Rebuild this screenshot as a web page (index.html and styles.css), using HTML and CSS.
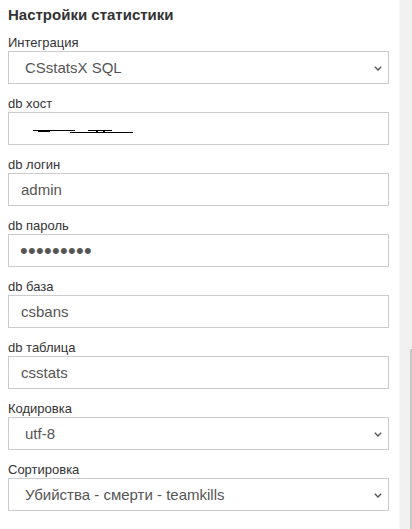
FILE: index.html
```html
<!DOCTYPE html>
<html lang="ru">
<head>
<meta charset="utf-8">
<title>Настройки статистики</title>
<link rel="stylesheet" href="styles.css">
</head>
<body>
<div class="page">
  <form class="panel">
    <h3 class="title">Настройки статистики</h3>

    <div class="field">
      <label class="label">Интеграция</label>
      <div class="select-wrap">
        <select class="control select"><option>CSstatsX SQL</option></select>
        <svg class="chevron" width="8" height="5" viewBox="0 0 8 5"><path d="M0.8 0.8 L4 4 L7.2 0.8" fill="none" stroke="#555" stroke-width="1.4"/></svg>
      </div>
    </div>

    <div class="field">
      <label class="label">db хост</label>
      <div class="input-wrap">
        <input class="control input" type="text" value="">
        <svg class="scribble" width="104" height="6" viewBox="0 0 104 6">
          <path d="M0 0.5 H42" stroke="#000" stroke-width="1"/>
          <path d="M5 1 H17" stroke="#000" stroke-width="2"/>
          <path d="M37 2.5 H100" stroke="#000" stroke-width="1"/>
          <path d="M55 0.5 H79" stroke="#000" stroke-width="1"/>
          <path d="M63 1.5 H65 M70 1.5 H72" stroke="#000" stroke-width="1"/>
        </svg>
      </div>
    </div>

    <div class="field">
      <label class="label">db логин</label>
      <input class="control input" type="text" value="admin">
    </div>

    <div class="field">
      <label class="label">db пароль</label>
      <input class="control input pass" type="password" value="123456789">
    </div>

    <div class="field">
      <label class="label">db база</label>
      <input class="control input" type="text" value="csbans">
    </div>

    <div class="field">
      <label class="label">db таблица</label>
      <input class="control input" type="text" value="csstats">
    </div>

    <div class="field">
      <label class="label">Кодировка</label>
      <div class="select-wrap">
        <select class="control select"><option>utf-8</option></select>
        <svg class="chevron" width="8" height="5" viewBox="0 0 8 5"><path d="M0.8 0.8 L4 4 L7.2 0.8" fill="none" stroke="#555" stroke-width="1.4"/></svg>
      </div>
    </div>

    <div class="field">
      <label class="label">Сортировка</label>
      <div class="select-wrap">
        <select class="control select"><option>Убийства - смерти - teamkills</option></select>
        <svg class="chevron" width="8" height="5" viewBox="0 0 8 5"><path d="M0.8 0.8 L4 4 L7.2 0.8" fill="none" stroke="#555" stroke-width="1.4"/></svg>
      </div>
    </div>
  </form>
  <div class="scrollbar"><div class="thumb"></div></div>
</div>
</body>
</html>
```

FILE: styles.css
```css
html, body {
  margin: 0;
  padding: 0;
  background: #fff;
}
body {
  font-family: "Liberation Sans", Arial, sans-serif;
  color: #333;
}
.page {
  display: flex;
  height: 529px;
  overflow: hidden;
}
.panel {
  flex: 1;
  padding: 6px 10px 0 8px;
  margin: 0;
}
.title {
  margin: 0 0 10px;
  font-size: 15px;
  line-height: 18px;
  font-weight: bold;
  color: #333;
}
.field {
  display: flex;
  flex-direction: column;
  margin-bottom: 11px;
}
.label {
  font-size: 13px;
  line-height: 17px;
  color: #333;
}
.control {
  box-sizing: border-box;
  display: block;
  width: 100%;
  height: 33px;
  margin: 0;
  border: 1px solid #ccc;
  border-radius: 0;
  background: #fff;
  font-family: "Liberation Sans", Arial, sans-serif;
  font-size: 15px;
  color: #555;
  outline: none;
}
.input {
  padding: 0 12px;
}
.pass {
  font-size: 22px;
  letter-spacing: 0.3px;
  padding-left: 11px;
}
.select {
  -webkit-appearance: none;
  appearance: none;
  padding: 0 30px 0 16px;
}
.select-wrap, .input-wrap {
  position: relative;
}
.chevron {
  position: absolute;
  right: 7px;
  top: 15px;
  pointer-events: none;
}
.scribble {
  position: absolute;
  left: 25px;
  top: 18px;
  pointer-events: none;
}
.scrollbar {
  width: 12px;
  background: #f1f1f1;
  border-left: 1px solid #f7f7f7;
  display: flex;
  flex-direction: column;
  align-items: flex-end;
  justify-content: flex-end;
}
.thumb {
  width: 2px;
  height: 180px;
  background: #c8c8c8;
}
```
